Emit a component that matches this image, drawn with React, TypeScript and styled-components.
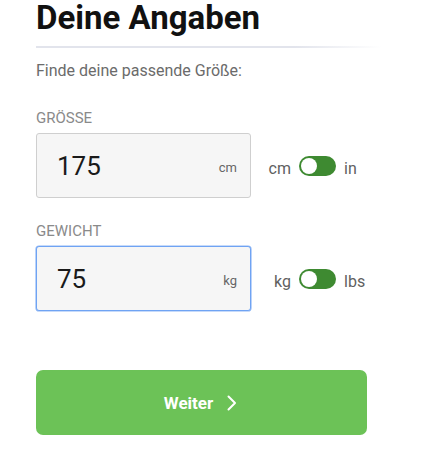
import React from "react";
import styled, { createGlobalStyle } from "styled-components";

const GlobalStyle = createGlobalStyle`
  html, body { margin: 0; padding: 0; background: #ffffff; }
  body { font-family: Roboto, "Liberation Sans", Arial, sans-serif; }
  * { box-sizing: border-box; }
`;

const Page = styled.div`
  width: 440px;
  height: 470px;
  padding: 0 0 0 36px;
  display: flex;
  flex-direction: column;
`;

const Title = styled.h1`
  margin: 0;
  font-size: 33px;
  line-height: 35px;
  font-weight: 700;
  color: #111111;
`;

const Divider = styled.div`
  margin-top: 11px;
  width: 345px;
  height: 2px;
  background: linear-gradient(to right, #e2e4ec 0%, #e2e4ec 75%, rgba(226, 228, 236, 0) 100%);
`;

const Intro = styled.p`
  margin: 14px 0 0;
  font-size: 16px;
  line-height: 18px;
  color: #6b6b6b;
`;

const Field = styled.div<{ $top: number }>`
  margin-top: ${(p) => p.$top}px;
  display: flex;
  flex-direction: column;
`;

const Label = styled.label`
  font-size: 15px;
  line-height: 18px;
  color: #8a8a8a;
  text-transform: uppercase;
  margin-bottom: 6px;
`;

const Row = styled.div`
  display: flex;
  align-items: center;
`;

const InputBox = styled.div<{ $focused?: boolean }>`
  width: 215px;
  height: 65px;
  display: flex;
  align-items: center;
  justify-content: space-between;
  padding: 0 13px 0 20px;
  background: #f6f6f6;
  border: 1px solid ${(p) => (p.$focused ? "#6fa3f3" : "#cfcfcf")};
  box-shadow: ${(p) => (p.$focused ? "0 0 0 0.6px #8db6f5" : "none")};
  border-radius: 3px;
`;

const Value = styled.span`
  font-size: 26px;
  line-height: 30px;
  color: #1a1a1a;
`;

const InnerUnit = styled.span`
  font-size: 13px;
  line-height: 16px;
  padding-top: 4px;
  color: #666666;
`;

const UnitSwitch = styled.div`
  display: flex;
  align-items: center;
  gap: 8px;
`;

const UnitText = styled.span<{ $align: "left" | "right"; $w?: number }>`
  width: ${(p) => (p.$w ? `${p.$w}px` : "auto")};
  text-align: ${(p) => p.$align};
  font-size: 16px;
  line-height: 20px;
  padding-top: 7px;
  color: #5f5f5f;
`;

const Toggle = styled.span`
  position: relative;
  width: 37px;
  height: 20px;
  border-radius: 10px;
  background: #3e8a31;
  flex: 0 0 auto;
`;

const Knob = styled.span`
  position: absolute;
  left: 2px;
  top: 2px;
  width: 16px;
  height: 16px;
  border-radius: 50%;
  background: #ffffff;
`;

const Button = styled.button`
  margin-top: 59px;
  width: 331px;
  height: 65px;
  border: none;
  border-radius: 7px;
  background: #6cc257;
  color: #ffffff;
  font-family: Roboto, "Liberation Sans", Arial, sans-serif;
  font-size: 17px;
  font-weight: 700;
  display: flex;
  align-items: center;
  justify-content: center;
  gap: 14px;
  padding: 0 2px 0 0;
  cursor: pointer;
`;

const Chevron = () => (
  <svg width="10" height="16" viewBox="0 0 10 16" fill="none">
    <polyline points="1.5,1.5 8,8 1.5,14.5" stroke="#ffffff" strokeWidth="2" strokeLinecap="round" strokeLinejoin="round" />
  </svg>
);

type FieldProps = {
  label: string;
  value: string;
  unit: string;
  left: string;
  right: string;
  focused?: boolean;
  top: number;
};

const MeasureField = ({ label, value, unit, left, right, focused, top }: FieldProps) => (
  <Field $top={top}>
    <Label>{label}</Label>
    <Row>
      <InputBox $focused={focused}>
        <Value>{value}</Value>
        <InnerUnit>{unit}</InnerUnit>
      </InputBox>
      <UnitSwitch>
        <UnitText $align="right" $w={40}>{left}</UnitText>
        <Toggle>
          <Knob />
        </Toggle>
        <UnitText $align="left">{right}</UnitText>
      </UnitSwitch>
    </Row>
  </Field>
);

export default function App() {
  return (
    <>
      <GlobalStyle />
      <Page>
        <Title>Deine Angaben</Title>
        <Divider />
        <Intro>Finde deine passende Größe:</Intro>
        <MeasureField top={29} label="Grösse" value="175" unit="cm" left="cm" right="in" />
        <MeasureField top={24} label="Gewicht" value="75" unit="kg" left="kg" right="lbs" focused />
        <Button>
          Weiter
          <Chevron />
        </Button>
      </Page>
    </>
  );
}
